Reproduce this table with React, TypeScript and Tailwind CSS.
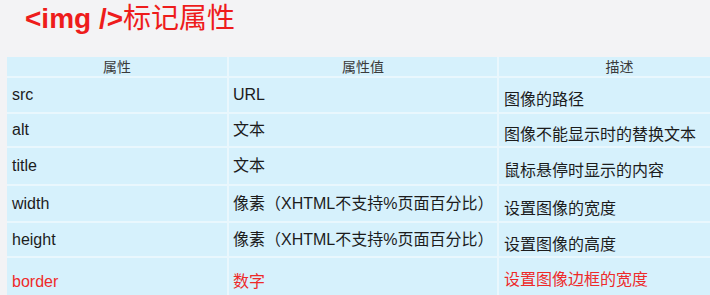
import React from "react";

type Row = { name: string; value: string; desc: string; red?: boolean; h: string };

const rows: Row[] = [
  { name: "src", value: "URL", desc: "图像的路径", h: "h-[36px]" },
  { name: "alt", value: "文本", desc: "图像不能显示时的替换文本", h: "h-[34px]" },
  { name: "title", value: "文本", desc: "鼠标悬停时显示的内容", h: "h-[38px]" },
  { name: "width", value: "像素（XHTML不支持%页面百分比）", desc: "设置图像的宽度", h: "h-[37px]" },
  { name: "height", value: "像素（XHTML不支持%页面百分比）", desc: "设置图像的高度", h: "h-[35px]" },
  { name: "border", value: "数字", desc: "设置图像边框的宽度", red: true, h: "h-[40px]" },
];

const font = "font-['Liberation_Sans','Noto_Sans_CJK_SC',sans-serif]";

export default function App() {
  return (
    <div className={`w-[710px] h-[295px] overflow-hidden bg-[#f3f3f5] ${font}`}>
      <h1 className="pl-[25px] pt-[4px] h-[57px] text-[28px] leading-[30px] text-[#ee1c1c]">
        <span className="font-bold">&lt;img /&gt;</span>
        <span>标记属性</span>
      </h1>
      <table className="ml-[7px] w-[733px] border-collapse table-fixed">
        <colgroup>
          <col className="w-[221px]" />
          <col className="w-[270px]" />
          <col />
        </colgroup>
        <thead>
          <tr className="h-[20px] bg-[#d6f1fc] text-[14px] leading-[16px] text-[#3a3a3a]">
            <th className="font-normal border-r-2 border-b-2 border-[#e9f7fd]">属性</th>
            <th className="font-normal border-r-2 border-b-2 border-[#e9f7fd]">属性值</th>
            <th className="font-normal border-b-2 border-[#e9f7fd]">描述</th>
          </tr>
        </thead>
        <tbody>
          {rows.map((r) => {
            const color = r.red ? "text-[#ee2a2a]" : "text-[#1c1c1c]";
            return (
              <tr key={r.name} className={`${r.h} bg-[#d6f1fc] text-[16px] leading-[18px] ${color}`}>
                <td className={`pl-[5px] border-r-2 border-b-2 border-[#e9f7fd] ${r.red ? "pt-[10px]" : ""}`}>{r.name}</td>
                <td className={`pl-[4px] whitespace-nowrap border-r-2 border-b-2 border-[#e9f7fd] ${r.red ? "pt-[10px]" : ""}`}>{r.value}</td>
                <td className={`pl-[5px] whitespace-nowrap border-b-2 border-[#e9f7fd] ${r.red ? "pt-[6px]" : "pt-[10px]"}`}>{r.desc}</td>
              </tr>
            );
          })}
        </tbody>
      </table>
    </div>
  );
}
